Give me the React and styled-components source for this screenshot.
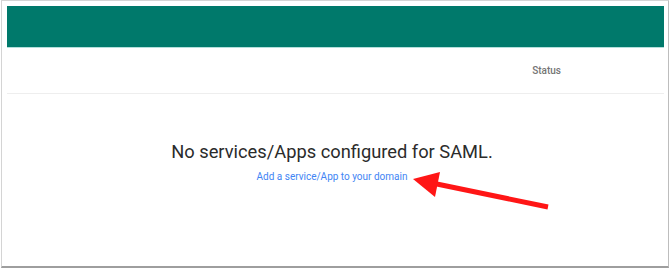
import React from "react";
import styled, { createGlobalStyle } from "styled-components";

const GlobalStyle = createGlobalStyle`
  html, body {
    margin: 0;
    padding: 0;
    background: #ffffff;
    font-family: Roboto, "Liberation Sans", sans-serif;
  }
`;

const Frame = styled.div`
  position: relative;
  box-sizing: border-box;
  width: 668px;
  height: 268px;
  margin-left: 1px;
  padding: 5px 4px 0 5px;
  background: #ffffff;
  border: 1px solid #d4d4d4;
  border-right-color: #bdbdbd;
  border-bottom: 2px solid #9e9e9e;
  overflow: hidden;
`;

const Banner = styled.div`
  height: 41px;
  background: #00796b;
  border-bottom: 1px solid #b2dfdb;
`;

const HeaderRow = styled.div`
  display: flex;
  align-items: center;
  justify-content: flex-end;
  height: 45px;
  padding-right: 103px;
  border-bottom: 1px solid #eeeeee;
`;

const ColumnLabel = styled.span`
  font-size: 10px;
  font-weight: 500;
  color: #757575;
`;

const Empty = styled.div`
  display: flex;
  flex-direction: column;
  align-items: center;
  padding-top: 46px;
  padding-right: 7px;
`;

const Title = styled.h2`
  margin: 0;
  font-size: 18.3px;
  font-weight: 400;
  color: #2b2b2b;
  line-height: 24px;
`;

const AddLink = styled.a`
  margin-top: 6px;
  font-size: 10px;
  color: #4285f4;
  text-decoration: none;
  line-height: 13px;
`;

const Arrow = styled.svg`
  position: absolute;
  left: 0;
  top: 0;
  pointer-events: none;
`;

export default function App() {
  return (
    <>
      <GlobalStyle />
      <Frame>
        <Banner />
        <HeaderRow>
          <ColumnLabel>Status</ColumnLabel>
        </HeaderRow>
        <Empty>
          <Title>No services/Apps configured for SAML.</Title>
          <AddLink href="#">Add a service/App to your domain</AddLink>
        </Empty>
        <Arrow width="668" height="268" viewBox="0 0 668 268">
          <line x1="546" y1="206" x2="430" y2="182" stroke="#ff1616" strokeWidth="5" />
          <polygon points="411,178 438,171 433,196" fill="#ff1616" />
        </Arrow>
      </Frame>
    </>
  );
}
